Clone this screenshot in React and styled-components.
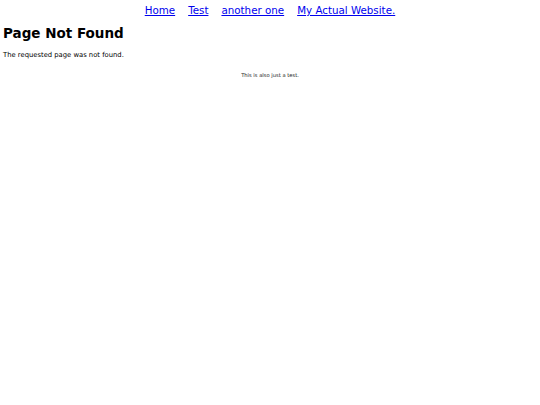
import React from 'react';
import styled, { createGlobalStyle } from 'styled-components';

const GlobalStyle = createGlobalStyle`
  body {
    margin: 0;
    padding: 3px;
    background: #fff;
    color: #000;
    font-family: "DejaVu Sans", Verdana, sans-serif;
  }
`;

const Nav = styled.nav`
  display: flex;
  justify-content: center;
  gap: 13px;
  font-size: 10.3px;
  line-height: 14px;
`;

const NavLink = styled.a`
  color: #0000ee;
  text-decoration: underline;
`;

const Title = styled.h1`
  font-size: 13.5px;
  font-weight: bold;
  margin: 7px 0 0;
  line-height: 18px;
`;

const Message = styled.p`
  font-size: 6.8px;
  margin: 9px 0 0;
  line-height: 9px;
`;

const Footer = styled.p`
  font-size: 5.2px;
  text-align: center;
  color: #222;
  margin: 12px 0 0;
  line-height: 7px;
`;

const links = ['Home', 'Test', 'another one', 'My Actual Website.'];

export default function App() {
  return (
    <>
      <GlobalStyle />
      <Nav>
        {links.map((l) => (
          <NavLink key={l} href="#">{l}</NavLink>
        ))}
      </Nav>
      <Title>Page Not Found</Title>
      <Message>The requested page was not found.</Message>
      <Footer>This is also just a test.</Footer>
    </>
  );
}
